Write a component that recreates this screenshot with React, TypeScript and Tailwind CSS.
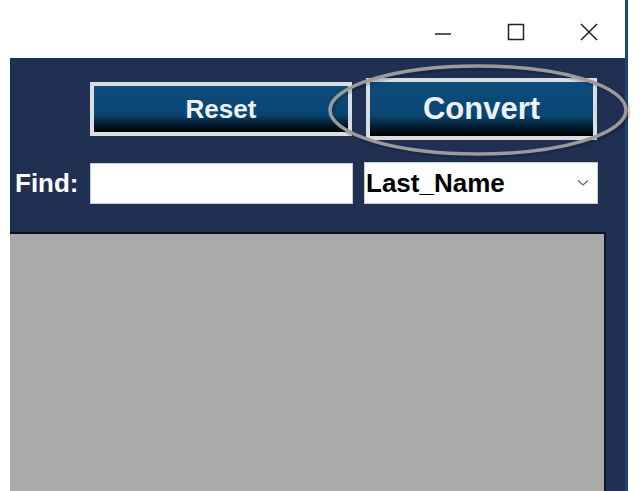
const btnBg =
  'bg-[linear-gradient(to_bottom,#0c4b7b_0%,#0a4674_62%,#03182a_85%,#000000_100%)]';

const App = () => {
  return (
    <div className="relative w-[641px] h-[491px] overflow-hidden bg-white font-['Liberation_Sans',Arial,sans-serif]">
      <div className="flex flex-col w-[628px] h-full border-r-[3px] border-r-[#1e4674]">
        {/* Title bar */}
        <div className="h-[58px] flex justify-end items-center pt-[6px] shrink-0">
          <div className="w-[73px] h-full flex items-center justify-center">
            <svg width="18" height="18" viewBox="0 0 18 18" className="mt-[4px]">
              <line x1="1" y1="9" x2="17" y2="9" stroke="#222" strokeWidth="1.5" />
            </svg>
          </div>
          <div className="w-[73px] h-full flex items-center justify-center">
            <svg width="18" height="18" viewBox="0 0 18 18">
              <rect x="1.5" y="1.5" width="15" height="15" fill="none" stroke="#222" strokeWidth="1.5" />
            </svg>
          </div>
          <div className="w-[73px] h-full flex items-center justify-center">
            <svg width="18" height="18" viewBox="0 0 18 18">
              <path d="M1 1 L17 17 M17 1 L1 17" stroke="#222" strokeWidth="1.5" />
            </svg>
          </div>
        </div>

        {/* Window body */}
        <div className="flex-1 ml-[10px] bg-[#1f3053] flex flex-col">
          <div className="mt-[20px] h-[62px] flex items-center pl-[80px]">
            <button
              className={`w-[262px] h-[54px] border-[4px] border-[#dadde2] ${btnBg} text-[#eef2f6] text-[26px] font-bold`}
            >
              Reset
            </button>
            <button
              className={`ml-[14px] w-[231px] h-[62px] border-[4px] border-[#dadde2] ${btnBg} text-[#eef2f6] text-[31px] font-bold`}
            >
              Convert
            </button>
          </div>

          <div className="mt-[22px] h-[42px] flex items-center">
            <div className="w-[80px] pl-[5px] text-white text-[26px] font-bold">Find:</div>
            <div className="w-[263px] h-[41px] bg-white border border-[#c9ccd1]" />
            <div className="ml-[11px] w-[234px] h-[42px] bg-white border border-[#c9ccd1] flex items-center justify-between pl-[1px] pr-[8px]">
              <span className="text-black text-[26px] font-bold">Last_Name</span>
              <svg width="12" height="8" viewBox="0 0 12 8">
                <polyline points="1,1.5 6,6 11,1.5" fill="none" stroke="#666" strokeWidth="1.3" />
              </svg>
            </div>
          </div>

          <div className="mt-[28px] flex-1 w-[596px] bg-[#aaaaaa] border-t-2 border-t-[#0b0f18] border-r-2 border-r-[#10182a]" />
        </div>
      </div>

      {/* Highlight ellipse */}
      <svg
        className="absolute left-[326px] top-[62px] pointer-events-none"
        width="306"
        height="100"
        viewBox="0 0 306 100"
      >
        <ellipse cx="154" cy="50" rx="148" ry="44" fill="none" stroke="rgba(0,0,0,0.15)" strokeWidth="5" />
        <ellipse cx="152" cy="48" rx="148" ry="44" fill="none" stroke="#9b9b9b" strokeWidth="3.5" />
      </svg>
    </div>
  );
};

export default App;
